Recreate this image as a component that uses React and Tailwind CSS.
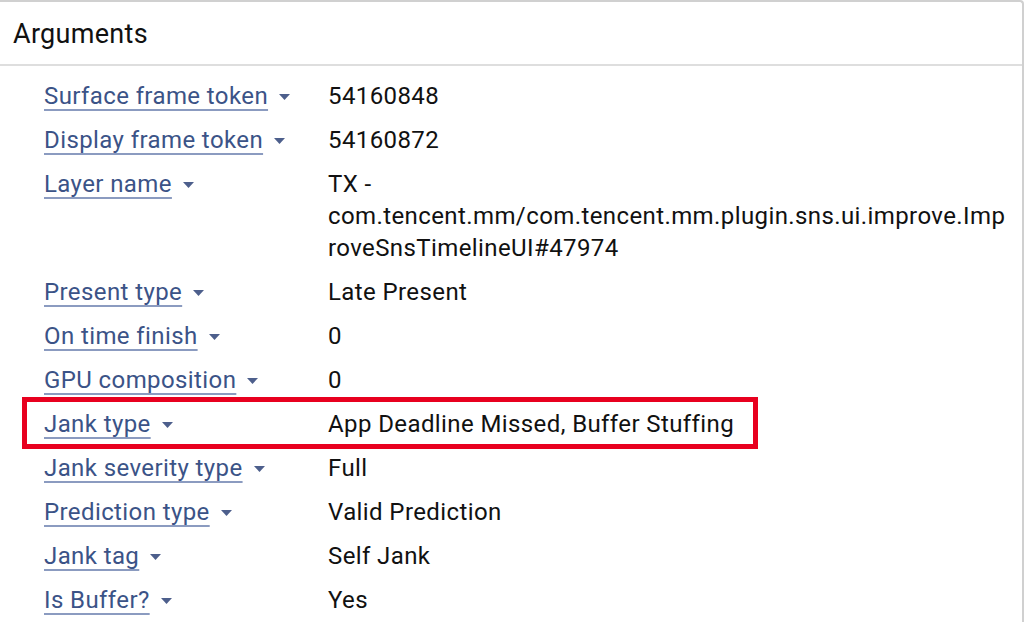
const rows = [
  { label: "Surface frame token", value: ["54160848"] },
  { label: "Display frame token", value: ["54160872"] },
  {
    label: "Layer name",
    value: [
      "TX -",
      "com.tencent.mm/com.tencent.mm.plugin.sns.ui.improve.Imp",
      "roveSnsTimelineUI#47974",
    ],
  },
  { label: "Present type", value: ["Late Present"] },
  { label: "On time finish", value: ["0"] },
  { label: "GPU composition", value: ["0"] },
  { label: "Jank type", value: ["App Deadline Missed, Buffer Stuffing"], marked: true },
  { label: "Jank severity type", value: ["Full"] },
  { label: "Prediction type", value: ["Valid Prediction"] },
  { label: "Jank tag", value: ["Self Jank"] },
  { label: "Is Buffer?", value: ["Yes"] },
];

function Caret() {
  return (
    <svg width="11" height="6" viewBox="0 0 11 6" className="ml-[11px] mt-[2px] shrink-0">
      <path d="M0 0 L11 0 L5.5 6 Z" fill="#4d5f8c" />
    </svg>
  );
}

export default function App() {
  return (
    <div className="w-[1034px] h-[626px] overflow-hidden bg-white font-['Roboto',sans-serif]">
      <div className="w-[1024px] border-t-2 border-r-2 border-[#d0d0d0] rounded-tr-[4px]">
        <div className="h-[64px] flex items-center pl-[13px] pt-[3px] border-b-2 border-[#dedede]">
          <span className="text-[27px] text-[#111] leading-none tracking-[0.3px]">Arguments</span>
        </div>
        <div className="pt-[8px]">
          {rows.map((r) => (
            <div key={r.label} className="relative flex py-[6px] leading-[32px] text-[24px] tracking-[0.4px]">
              {r.marked && (
                <div className="absolute left-[22px] top-[-5px] w-[736px] h-[52px] border-[5px] border-[#e8001f]" />
              )}
              <div className="w-[328px] pl-[44px] shrink-0 flex items-center h-[32px]">
                <span className="text-[#3b5387] underline decoration-[#8b9bc0] decoration-2 underline-offset-[5px] whitespace-nowrap">
                  {r.label}
                </span>
                <Caret />
              </div>
              <div className="text-[#111] flex flex-col">
                {r.value.map((v) => (
                  <span key={v} className="whitespace-nowrap">
                    {v}
                  </span>
                ))}
              </div>
            </div>
          ))}
        </div>
      </div>
    </div>
  );
}
